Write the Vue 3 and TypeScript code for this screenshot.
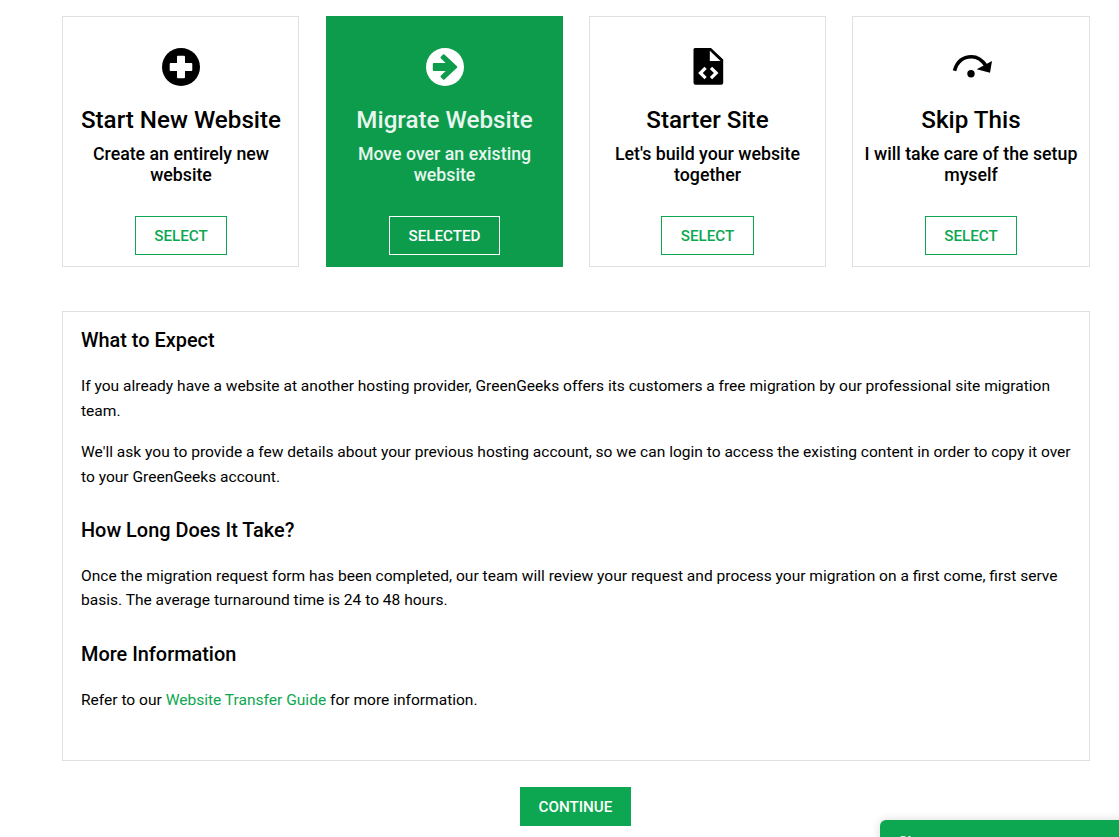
<script setup lang="ts">
interface Option {
  icon: string
  title: string
  text: string
  selected?: boolean
}

const options: Option[] = [
  { icon: 'plus', title: 'Start New Website', text: 'Create an entirely new website' },
  { icon: 'arrow', title: 'Migrate Website', text: 'Move over an existing website', selected: true },
  { icon: 'code', title: 'Starter Site', text: "Let's build your website together" },
  { icon: 'skip', title: 'Skip This', text: 'I will take care of the setup myself' },
]
</script>

<template>
  <main class="page">
    <section class="options">
      <article v-for="o in options" :key="o.title" class="card" :class="{ selected: o.selected }">
        <svg class="icon" viewBox="0 0 40 40" width="40" height="40" aria-hidden="true">
          <template v-if="o.icon === 'plus'">
            <circle cx="20" cy="20" r="19" fill="#000" />
            <path d="M17 8.700h6a1 1 0 0 1 1 1V16h6.300a1 1 0 0 1 1 1v6a1 1 0 0 1-1 1H24v6.300a1 1 0 0 1-1 1h-6a1 1 0 0 1-1-1V24H9.700a1 1 0 0 1-1-1v-6a1 1 0 0 1 1-1H16V9.700a1 1 0 0 1 1-1z" fill="#fff" />
          </template>
          <template v-else-if="o.icon === 'arrow'">
            <circle cx="20" cy="20" r="19" fill="#fff" />
            <path d="M8.800 16H20.600L15.800 11.200a1 1 0 0 1 0-1.400L18 7.600a1 1 0 0 1 1.400 0L32 19.300a1 1 0 0 1 0 1.400L19.400 32.400a1 1 0 0 1-1.400 0L15.800 30.200a1 1 0 0 1 0-1.400L20.600 24H8.800a1 1 0 0 1-1-1v-6a1 1 0 0 1 1-1z" fill="#0c9c4c" />
          </template>
          <template v-else-if="o.icon === 'code'">
            <path d="M7 1H23L35.200 12.500V35.700a2 2 0 0 1-2 2H7.500a2 2 0 0 1-2-2V2.500A1.500 1.500 0 0 1 7 1z" fill="#000" />
            <path d="M21.800 3.700V14H32.500z" fill="#fff" />
            <path d="M17.600 20.800 12.400 26l5.200 5.200M23 20.800 28.200 26 23 31.200" fill="none" stroke="#fff" stroke-width="3.200" />
          </template>
          <template v-else>
            <path d="M3.500 23.700C6 15 12 9.800 20.500 9.800c6 0 10.500 3 14.500 9" fill="none" stroke="#000" stroke-width="3.600" />
            <path d="M41 14 39 25.700 25.700 22.300z" fill="#000" />
            <circle cx="20" cy="26.700" r="3.700" fill="#000" />
          </template>
        </svg>
        <h2 class="card-title">{{ o.title }}</h2>
        <p class="card-text">{{ o.text }}</p>
        <button class="select" type="button">{{ o.selected ? 'SELECTED' : 'SELECT' }}</button>
      </article>
    </section>

    <section class="details">
      <h3>What to Expect</h3>
      <p>If you already have a website at another hosting provider, GreenGeeks offers its customers a free migration by our professional site migration team.</p>
      <p>We'll ask you to provide a few details about your previous hosting account, so we can login to access the existing content in order to copy it over to your GreenGeeks account.</p>
      <h3>How Long Does It Take?</h3>
      <p>Once the migration request form has been completed, our team will review your request and process your migration on a first come, first serve basis. The average turnaround time is 24 to 48 hours.</p>
      <h3>More Information</h3>
      <p>Refer to our <a href="#">Website Transfer Guide</a> for more information.</p>
    </section>

    <div class="actions">
      <button class="continue" type="button">CONTINUE</button>
    </div>

    <aside class="chat">Chat</aside>
  </main>
</template>

<style>
html,
body {
  background: #fff;
  overflow: hidden;
}
</style>

<style scoped>
.page {
  height: 837px;
  padding: 16px 29px 0 62px;
  box-sizing: border-box;
  font-family: Roboto, "Liberation Sans", sans-serif;
  color: #000;
  overflow: hidden;
}

.options {
  display: grid;
  grid-template-columns: 237px 238px 237px 238px;
  gap: 26px;
}

.card {
  height: 251px;
  box-sizing: border-box;
  border: 1px solid #e0e0e0;
  padding: 30px 10px 0;
  display: flex;
  flex-direction: column;
  align-items: center;
  text-align: center;
}

.card:first-child {
  padding-left: 11px;
}

.card.selected {
  margin-left: 1px;
  background: #0c9c4c;
  border-color: #0c9c4c;
  color: #e8f5ee;
}

.icon {
  display: block;
  flex: none;
  overflow: visible;
}

.card-title {
  margin: 19px 0 0;
  font-size: 24.2px;
  line-height: 28px;
  font-weight: 500;
}

.card-text {
  margin: 10px 0 0;
  font-size: 17.75px;
  line-height: 21px;
  font-weight: 500;
}

.select {
  margin-top: auto;
  margin-bottom: 11px;
  height: 39px;
  padding: 0 18.5px;
  border: 1px solid #0ca750;
  background: transparent;
  color: #0ca750;
  font: 500 15.2px Roboto, sans-serif;
}

.selected .select {
  border-color: #fff;
  color: #fff;
}

.details {
  margin-top: 44px;
  height: 450px;
  box-sizing: border-box;
  border: 1px solid #e0e0e0;
  padding: 17.4px 18px 0;
}

.details h3 {
  margin: 0;
  font-size: 19.9px;
  line-height: 24px;
  font-weight: 500;
}

.details p {
  margin: 16.4px 0 0;
  font-size: 15.55px;
  line-height: 24.8px;
}

.details h3 + p {
  margin-top: 20.4px;
}

.details p + h3 {
  margin-top: 29.8px;
}

.details p:last-child {
  margin-top: 21px;
}

.details a {
  color: #0ca750;
  text-decoration: none;
}

.actions {
  margin-top: 26px;
  display: flex;
  justify-content: center;
}

.continue {
  width: 111px;
  height: 39px;
  margin-left: -1px;
  padding: 0;
  border: 0;
  background: #0ca750;
  color: #fff;
  font: 500 15.2px Roboto, sans-serif;
}

.chat {
  position: fixed;
  left: 880px;
  top: 820px;
  width: 260px;
  height: 60px;
  box-sizing: border-box;
  padding: 13px 18px;
  border-radius: 6px 6px 0 0;
  background: #0ca750;
  color: #fff;
  font-size: 15px;
  font-weight: 500;
  box-shadow: 0 0 10px rgba(0, 0, 0, 0.15);
}
</style>
